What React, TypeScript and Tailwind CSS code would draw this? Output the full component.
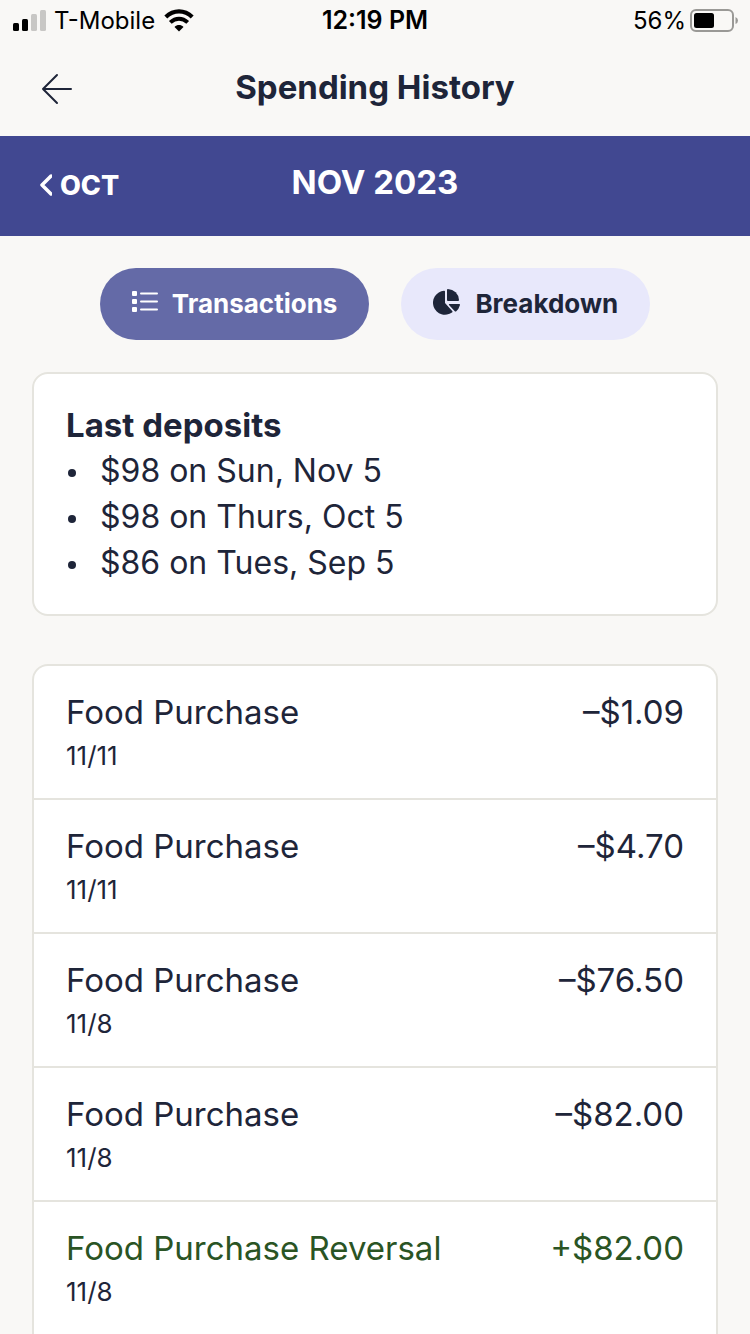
import React from 'react';

const deposits = ['$98 on Sun, Nov 5', '$98 on Thurs, Oct 5', '$86 on Tues, Sep 5'];

const transactions = [
  { name: 'Food Purchase', date: '11/11', amount: '–$1.09' },
  { name: 'Food Purchase', date: '11/11', amount: '–$4.70' },
  { name: 'Food Purchase', date: '11/8', amount: '–$76.50' },
  { name: 'Food Purchase', date: '11/8', amount: '–$82.00' },
  { name: 'Food Purchase Reversal', date: '11/8', amount: '+$82.00', credit: true },
];

const StatusBar = () => {
  return (
    <div className="grid h-[42px] grid-cols-3 items-center px-3 text-2xl text-black">
      <div className="flex items-center gap-2">
        <svg width="34" height="24" viewBox="0 0 34 24" aria-hidden="true">
          <rect x="1" y="14" width="6" height="8" rx="1.5" />
          <rect x="10" y="10" width="6" height="12" rx="1.5" />
          <rect x="19" y="5" width="6" height="17" rx="1.5" fill="#c8c7c5" />
          <rect x="28" y="1" width="6" height="21" rx="1.5" fill="#c8c7c5" />
        </svg>
        <span>T-Mobile</span>
        <svg width="32" height="26" viewBox="0 0 32 26" aria-hidden="true">
          <path d="M2.8 8.9C10.5 1.500 21.5 1.500 29.2 8.9" fill="none" stroke="#000" strokeWidth="4.200" />
          <path d="M7.300 14.4C12.600 9.400 19.4 9.400 24.700 14.4" fill="none" stroke="#000" strokeWidth="4" />
          <path d="M11.500 18.9C14.200 16.300 17.800 16.300 20.500 18.9L16 23.400Z" />
        </svg>
      </div>
      <span className="text-center text-[25px] font-semibold">12:19 PM</span>
      <div className="flex items-center justify-end gap-1">
        <span>56%</span>
        <svg width="48" height="26" viewBox="0 0 48 26" aria-hidden="true">
          <rect x="1" y="2" width="42" height="21" rx="5" fill="none" stroke="#9a9996" strokeWidth="2" />
          <rect x="4" y="5" width="20" height="15" rx="2.500" />
          <path d="M45.500 9Q48 10 48 12.500T45.500 16Z" fill="#9a9996" />
        </svg>
      </div>
    </div>
  );
};

const ListIcon = () => {
  return (
    <svg width="26" height="26" viewBox="0 0 26 26" fill="currentColor" aria-hidden="true">
      <rect x="0" y="0" width="5" height="5" rx="1" />
      <rect x="0" y="8" width="5" height="5" rx="1" />
      <rect x="0" y="16" width="5" height="5" rx="1" />
      <rect x="8" y="1.500" width="18" height="2" rx="1" />
      <rect x="8" y="9.500" width="18" height="2" rx="1" />
      <rect x="8" y="17.500" width="18" height="2" rx="1" />
    </svg>
  );
};

const PieIcon = () => {
  return (
    <svg width="28" height="30" viewBox="0 0 28 30" fill="currentColor" aria-hidden="true">
      <path d="M11 1.800Q12 1.600 12 2.600V14L19.200 22.100Q19.900 22.900 19 23.500A12 12 0 1 1 11 1.800Z" />
      <path d="M14 .9Q14 0 14.900 0A11.500 11.500 0 0 1 26 11.100Q26 12 25.100 12H15Q14 12 14 11Z" />
      <path d="M16.500 15H26.200Q27.200 15 27 16A12 12 0 0 1 23 22.400Q22.400 22.900 21.800 22.200L16 16Q15.400 15 16.500 15Z" />
    </svg>
  );
};

const App = () => {
  return (
    <main className="min-h-screen bg-[#f9f8f6] font-['Inter','Liberation_Sans',sans-serif] text-[#1e2539]">
      <StatusBar />
      <header className="grid h-[94px] grid-cols-[1fr_auto_1fr] items-center px-10">
        <button type="button" aria-label="Back" className="w-8">
          <svg width="32" height="32" viewBox="0 0 32 32" fill="none" stroke="currentColor" strokeWidth="2" strokeLinecap="round" strokeLinejoin="round" aria-hidden="true">
            <path d="M31 16H3M17 2L3 16l14 14" />
          </svg>
        </button>
        <h1 className="pb-1 text-[33px] leading-10 font-bold">Spending History</h1>
      </header>

      <nav className="grid h-25 grid-cols-[1fr_auto_1fr] items-center bg-[#414891] px-9 text-white">
        <a href="#" className="flex items-center gap-2 text-[27px] leading-8 font-extrabold">
          <svg width="16" height="24" viewBox="0 0 16 24" fill="none" stroke="currentColor" strokeWidth="3.500" strokeLinecap="round" strokeLinejoin="round" aria-hidden="true">
            <path d="M15 2L6 11l9 9" />
          </svg>
          OCT
        </a>
        <h2 className="pb-2 text-[33px] leading-10 font-bold">NOV 2023</h2>
      </nav>

      <div className="flex justify-center gap-8 px-8 py-8 text-[26px] leading-8 font-bold">
        <button type="button" className="flex h-18 items-center gap-3.5 rounded-full bg-[#646aa7] px-8 text-white">
          <ListIcon />
          Transactions
        </button>
        <button type="button" className="flex h-18 items-center gap-3.5 rounded-full bg-[#e8e8fb] px-8">
          <PieIcon />
          Breakdown
        </button>
      </div>

      <section className="mx-8 rounded-2xl border-2 border-[#e5e4de] bg-white px-8 py-7 text-[32px] leading-[46px]">
        <h3 className="text-[33px] font-bold">Last deposits</h3>
        <ul>
          {deposits.map((deposit) => (
            <li key={deposit} className="flex items-center gap-6">
              <span className="mt-1 ml-0.5 size-2 rounded-full bg-current" />
              <span>{deposit}</span>
            </li>
          ))}
        </ul>
      </section>

      <ul className="mx-8 mt-12 divide-y-2 divide-[#e5e4de] rounded-t-2xl border-x-2 border-t-2 border-[#e5e4de] bg-white">
        {transactions.map((item, index) => (
          <li key={index} className="px-8 pt-6 pb-5">
            <div className={item.credit ? 'flex justify-between text-[33px] leading-[44px] text-[#2a5424]' : 'flex justify-between text-[33px] leading-[44px]'}>
              <span>{item.name}</span>
              <span>{item.amount}</span>
            </div>
            <p className="text-[26px] leading-11">{item.date}</p>
          </li>
        ))}
      </ul>
    </main>
  );
};

export default App;
